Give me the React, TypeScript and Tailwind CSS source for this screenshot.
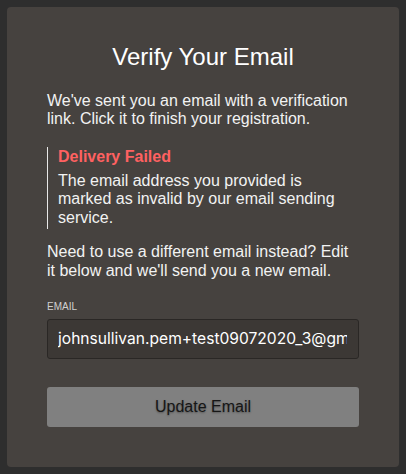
import React from "react";

export default function App() {
  return (
    <div
      className="w-[406px] h-[474px] bg-[#2e2e2e] p-[7px]"
      style={{ fontFamily: '"Liberation Sans", Arial, sans-serif' }}
    >
      <div className="h-[460px] w-[392px] rounded-[4px] bg-[#46423f] px-[40px] pt-[36px] flex flex-col">
        <h1 className="text-center text-[24px] leading-[28px] text-white">Verify Your Email</h1>
        <p className="mt-[21px] text-[16px] leading-[18.4px] text-[#f2f2f2]">
          We've sent you an email with a verification link. Click it to finish your registration.
        </p>
        <div className="mt-[18px] border-l border-[#e8e8e8] pl-[10px] pb-[2px]">
          <div className="text-[16px] leading-[19px] font-bold text-[#ff6161]">Delivery Failed</div>
          <p className="mt-[6px] text-[16px] leading-[18.5px] text-[#f2f2f2]">
            The email address you provided is marked as invalid by our email sending service.
          </p>
        </div>
        <p className="mt-[14px] text-[16px] leading-[18.4px] text-[#f2f2f2]">
          Need to use a different email instead? Edit it below and we'll send you a new email.
        </p>
        <label className="mt-[21px] text-[10px] leading-[12px] uppercase text-[#d0d0d0]">Email</label>
        <div className="mt-[6px] h-[40px] rounded-[3px] border border-[#2a2725] bg-[#3c3835] pl-[10px] pr-[11px] flex items-center">
          <div className="overflow-hidden flex-1">
            <span
              className="whitespace-nowrap text-[15.6px] text-white"
              style={{ fontFamily: "Inter, sans-serif" }}
            >
              johnsullivan.pem+test09072020_3@gmail.com
            </span>
          </div>
        </div>
        <button className="mt-[28px] h-[40px] rounded-[3px] bg-[#808080] text-[16px] text-[#161616] [text-shadow:0_1px_2px_rgba(0,0,0,0.35)]">
          Update Email
        </button>
      </div>
    </div>
  );
}
